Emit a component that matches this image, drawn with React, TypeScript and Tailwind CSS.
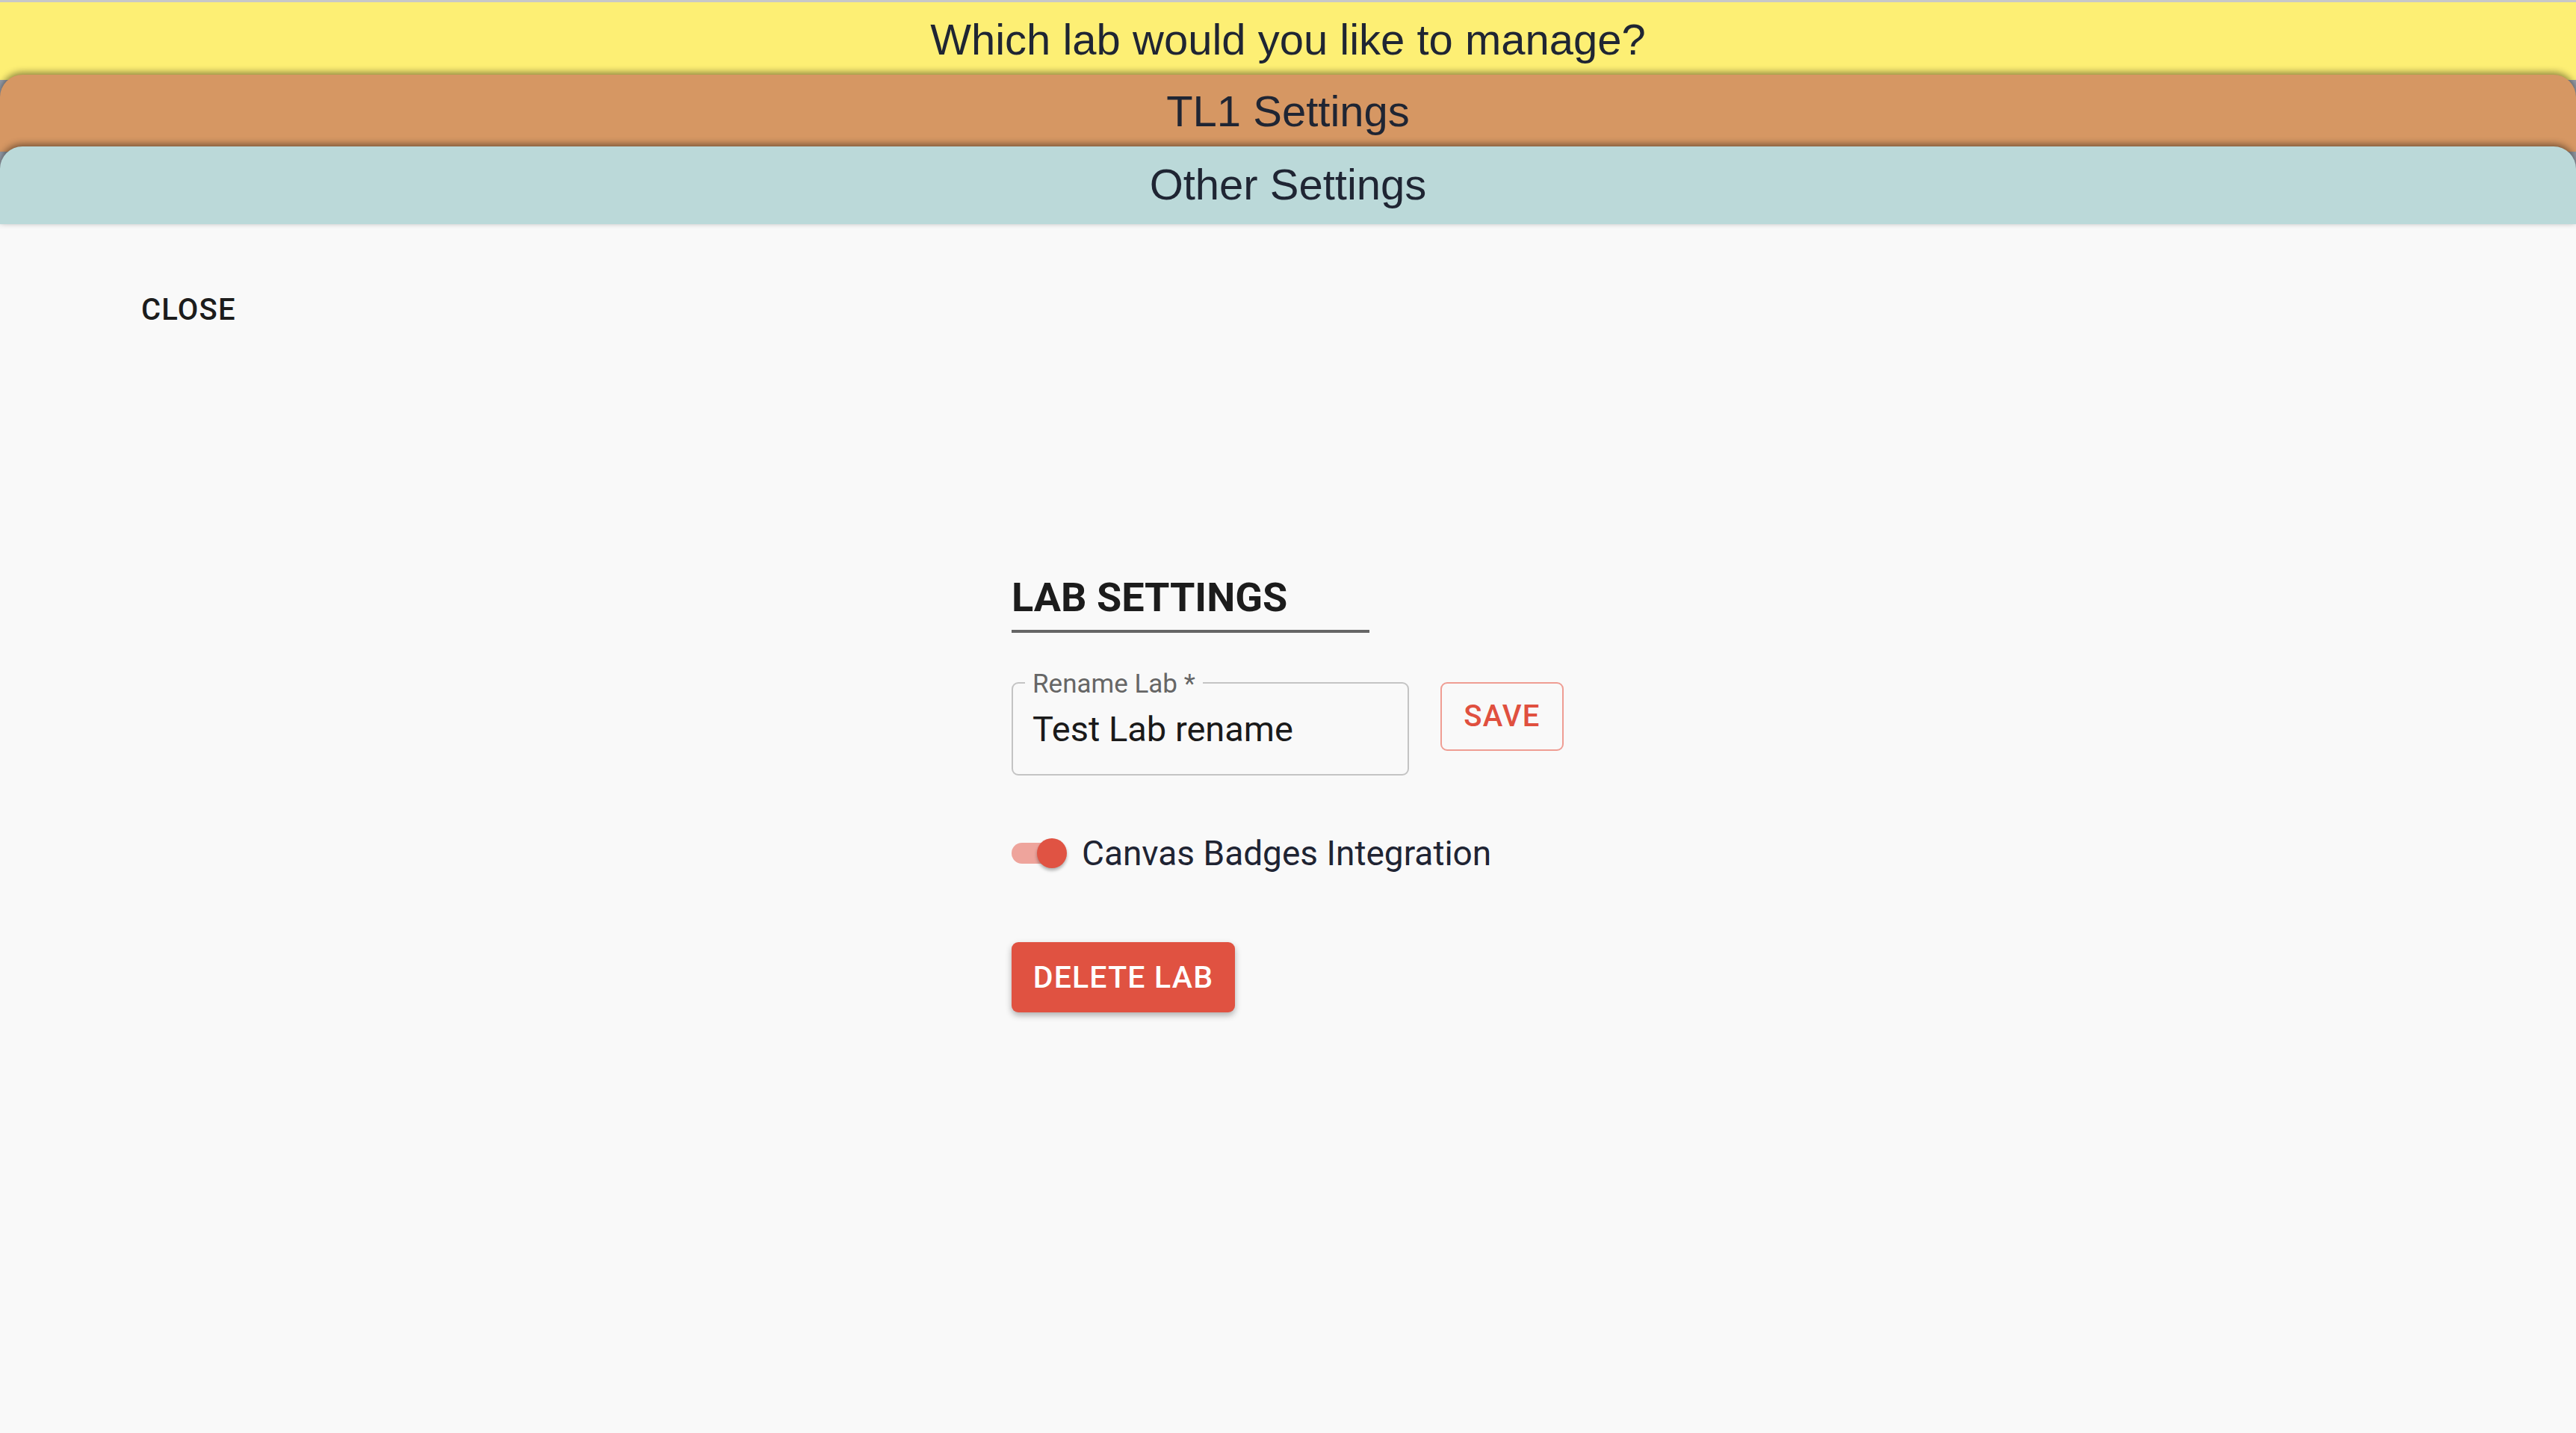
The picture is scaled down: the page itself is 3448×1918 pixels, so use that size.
const band = "flex items-center justify-center text-[58px] leading-none text-[#1f2533]";

function Switch() {
  return (
    <div className="relative h-[40px] w-[74px] shrink-0">
      <div className="absolute left-0 top-[6px] h-[28px] w-[64px] rounded-full bg-[#eea49c]" />
      <div className="absolute right-0 top-0 h-[40px] w-[40px] rounded-full bg-[#e05343] shadow-[0_3px_4px_rgba(0,0,0,0.3)]" />
    </div>
  );
}

export default function App() {
  return (
    <div className="flex min-h-[1918px] flex-col bg-[#f9f9f9] font-['Roboto',sans-serif]">
      {/* stacked tabs */}
      <div className="flex flex-col bg-[#9aa0ab] font-['Liberation_Sans',Arial,sans-serif]">
        <div className="h-[3px] bg-[#c8c8c8]" />
        <div className={`${band} h-[104px] bg-[#fdef74] pb-[5px]`}>Which lab would you like to manage?</div>
        <div
          className={`${band} relative -mt-[7px] h-[103px] rounded-t-[30px] bg-[#d69763] pb-[5px] shadow-[0_-3px_10px_rgba(0,0,0,0.45)]`}
        >
          TL1 Settings
        </div>
        <div
          className={`${band} relative -mt-[7px] h-[104px] rounded-t-[30px] bg-[#bbd9d9] pb-[2px] shadow-[0_-3px_10px_rgba(0,0,0,0.45)]`}
        >
          Other Settings
        </div>
      </div>

      <main className="flex flex-1 flex-col bg-[#f9f9f9] pt-[95px]">
        <div className="pl-[189px]">
          <span className="text-[40px] font-medium leading-none tracking-[1.2px] text-[#1c1c1c]">CLOSE</span>
        </div>

        <div className="mx-auto mt-[338px] flex w-[740px] flex-col items-start">
          <h2 className="w-[479px] border-b-4 border-[#666666] pb-[16px] text-[54px] font-bold leading-none text-[#1c1c1c]">
            LAB SETTINGS
          </h2>

          <div className="mt-[66px] flex items-start gap-[42px]">
            <div className="relative flex h-[125px] w-[532px] items-center rounded-[9px] border-2 border-[#c4c4c4] pl-[26px]">
              <span className="absolute -top-[19px] left-[16px] bg-[#f9f9f9] px-[10px] text-[35px] leading-[40px] text-[#666666]">
                Rename Lab *
              </span>
              <span className="text-[47px] leading-none text-[#1a1a1a]">Test Lab rename</span>
            </div>
            <button className="flex h-[92px] w-[165px] items-center justify-center rounded-[9px] border-2 border-[#ef9d93] text-[40px] font-medium leading-none tracking-[1.2px] text-[#e0503f]">
              SAVE
            </button>
          </div>

          <div className="mt-[84px] flex h-[40px] items-center gap-[20px]">
            <Switch />
            <span className="text-[46px] leading-none text-[#1f2433]">Canvas Badges Integration</span>
          </div>

          <button className="mt-[99px] flex h-[94px] w-[299px] items-center justify-center rounded-[9px] bg-[#e05241] text-[41px] font-medium leading-none tracking-[1.2px] text-white shadow-[0_4px_8px_rgba(0,0,0,0.3)]">
            DELETE LAB
          </button>
        </div>
      </main>
    </div>
  );
}
